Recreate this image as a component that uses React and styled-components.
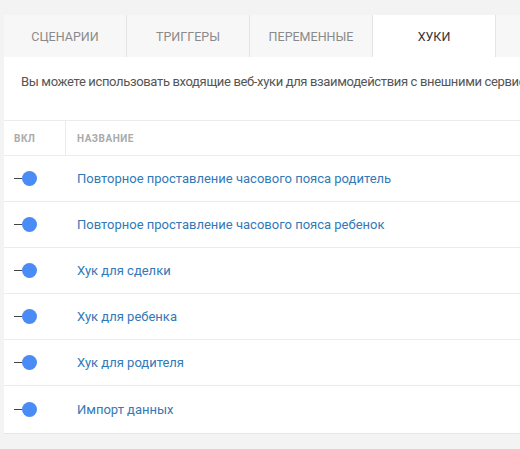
import styled, { createGlobalStyle } from 'styled-components'

const GlobalStyle = createGlobalStyle`
  html, body {
    margin: 0;
    padding: 0;
    background: #f3f3f3;
    font-family: Roboto, "Liberation Sans", sans-serif;
    overflow: hidden;
  }
`

const Page = styled.div`
  width: 520px;
  height: 449px;
  overflow: hidden;
  padding: 15px 0 0 4px;
  box-sizing: border-box;
`

const Card = styled.div`
  width: 640px;
  background: #fff;
  border-bottom: 1px solid #e6e6e6;
`

const Tabs = styled.div`
  display: flex;
  height: 42px;
  background: #f7f7f7;
`

const Tab = styled.div`
  width: 122px;
  display: flex;
  align-items: center;
  justify-content: center;
  border-right: 1px solid #e4e4e4;
  background: ${props => (props.active ? '#fff' : '#f7f7f7')};
  color: ${props => (props.active ? '#333' : '#8a8a8a')};
  font-size: 12.5px;
  text-transform: uppercase;
`

const Description = styled.div`
  padding: 17px 0 0 17px;
  height: 46px;
  font-size: 13px;
  letter-spacing: -0.35px;
  color: #555;
  white-space: nowrap;
`

const Table = styled.div`
  border-top: 1px solid #ececec;
`

const HeadRow = styled.div`
  display: flex;
  height: 34px;
  border-bottom: 1px solid #ececec;
`

const HeadCell = styled.div`
  width: ${props => props.width || 'auto'};
  flex: ${props => (props.width ? 'none' : '1')};
  display: flex;
  align-items: center;
  padding-left: ${props => props.pad};
  box-sizing: border-box;
  border-right: ${props => (props.divider ? '1px solid #ececec' : 'none')};
  font-size: 10px;
  font-weight: 700;
  letter-spacing: 0.5px;
  color: #aaa;
  text-transform: uppercase;
`

const Row = styled.div`
  display: flex;
  align-items: center;
  height: ${props => (props.last ? '47px' : '45px')};
  border-bottom: ${props => (props.last ? 'none' : '1px solid #ececec')};
`

const ToggleCell = styled.div`
  width: 66px;
  padding-left: 10px;
  box-sizing: border-box;
  display: flex;
  align-items: center;
`

const Toggle = styled.span`
  display: flex;
  align-items: center;
  &::before {
    content: '';
    width: 8px;
    height: 1px;
    background: #444;
  }
  &::after {
    content: '';
    width: 15px;
    height: 15px;
    border-radius: 50%;
    background: #4b8bf5;
  }
`

const Name = styled.a`
  padding-left: 7px;
  font-size: 13px;
  color: #3279b7;
  text-decoration: none;
`

const tabs = ['Сценарии', 'Триггеры', 'Переменные', 'Хуки']

const hooks = [
  'Повторное проставление часового пояса родитель',
  'Повторное проставление часового пояса ребенок',
  'Хук для сделки',
  'Хук для ребенка',
  'Хук для родителя',
  'Импорт данных',
]

export default function App() {
  return (
    <>
      <GlobalStyle />
      <Page>
        <Card>
          <Tabs>
            {tabs.map(t => (
              <Tab key={t} active={t === 'Хуки'}>
                {t}
              </Tab>
            ))}
          </Tabs>
          <Description>
            Вы можете использовать входящие веб-хуки для взаимодействия с внешними сервисами
          </Description>
          <Table>
            <HeadRow>
              <HeadCell width="62px" pad="10px" divider>
                Вкл
              </HeadCell>
              <HeadCell pad="11px">Название</HeadCell>
            </HeadRow>
            {hooks.map((h, i) => (
              <Row key={h} last={i === hooks.length - 1}>
                <ToggleCell>
                  <Toggle />
                </ToggleCell>
                <Name href="#">{h}</Name>
              </Row>
            ))}
          </Table>
        </Card>
      </Page>
    </>
  )
}
